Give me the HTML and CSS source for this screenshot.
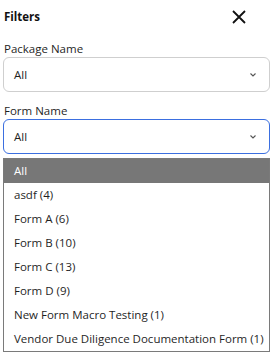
FILE: index.html
```html
<!DOCTYPE html>
<html>
<head>
<meta charset="utf-8">
<link rel="stylesheet" href="styles.css">
</head>
<body>
<div class="panel">
  <div class="header">
    <span class="title">Filters</span>
    <span class="close"><svg width="14" height="14" viewBox="0 0 14 14"><path d="M1 1 L13 13 M13 1 L1 13" stroke="#111" stroke-width="1.8" fill="none"/></svg></span>
  </div>
  <div class="label">Package Name</div>
  <div class="select"><span>All</span><svg class="chev" width="6" height="4" viewBox="0 0 6 4"><path d="M0.5 0.5 L3 3 L5.5 0.5" stroke="#555" stroke-width="1.1" fill="none"/></svg></div>
  <div class="label second">Form Name</div>
  <div class="select active"><span>All</span><svg class="chev" width="6" height="4" viewBox="0 0 6 4"><path d="M0.5 0.5 L3 3 L5.5 0.5" stroke="#555" stroke-width="1.1" fill="none"/></svg></div>
  <ul class="list">
    <li class="sel">All</li>
    <li>asdf (4)</li>
    <li>Form A (6)</li>
    <li>Form B (10)</li>
    <li>Form C (13)</li>
    <li>Form D (9)</li>
    <li>New Form Macro Testing (1)</li>
    <li>Vendor Due Diligence Documentation Form (1)</li>
  </ul>
</div>
</body>
</html>
```
FILE: styles.css
```css
html, body {
  margin: 0;
  padding: 0;
  background: #fff;
}
body {
  font-family: "Open Sans", "Noto Sans", sans-serif;
  font-size: 11.5px;
  color: #1f1f1f;
}
.panel {
  padding: 0 4px 0 3px;
}
.header {
  height: 32px;
  display: flex;
  align-items: center;
  justify-content: space-between;
  padding-left: 1px;
}
.title {
  font-weight: 700;
  font-size: 11.5px;
  color: #111;
}
.close {
  display: flex;
  margin-right: 24px;
  margin-top: 1px;
}
.label {
  margin-top: 9px;
  line-height: 16px;
  padding-left: 1px;
}
.label.second {
  margin-top: 11px;
}
.select {
  height: 35px;
  box-sizing: border-box;
  border: 1px solid #cfcfcf;
  border-radius: 6px;
  display: flex;
  align-items: center;
  justify-content: space-between;
  padding: 0 13px 0 10px;
}
.select.active {
  border-color: #3b6fe0;
}
.chev {
  margin-top: 1px;
}
.list {
  list-style: none;
  margin: 4px 0 0 0;
  padding: 0;
  border: 1px solid #7a7a7a;
}
.list li {
  height: 24px;
  line-height: 24px;
  padding-left: 10px;
  white-space: nowrap;
}
.list li.sel {
  background: #777777;
  color: #fff;
}
```
